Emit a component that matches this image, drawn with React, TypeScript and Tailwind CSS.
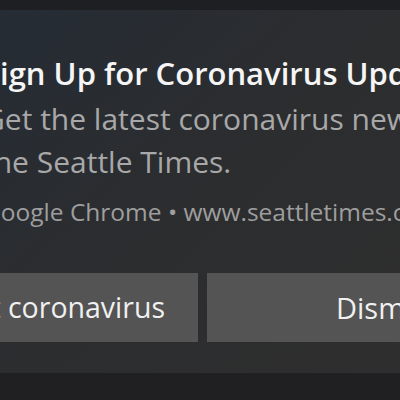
export default function App() {
  return (
    <div className="w-[400px] h-[400px] overflow-hidden bg-[#202023] flex flex-col font-['Open_Sans',sans-serif]">
      <div className="h-[10px] shrink-0 bg-[#1e1f22]" />
      <div className="h-[363px] shrink-0 bg-linear-to-br from-[#252c34] via-[#2c2d2f] to-[#2e2e2e] flex flex-col pt-[43px]">
        <div className="ml-[-17px] flex flex-col whitespace-nowrap">
          <div className="text-[31px] leading-[40px] font-semibold text-[#f5f5f5]">
            Sign Up for Coronavirus Updates
          </div>
          <div className="mt-[4px] text-[30px] leading-[43px] text-[#a8a8a8]">
            <div>Get the latest coronavirus news from</div>
            <div>the Seattle Times.</div>
          </div>
          <div className="mt-[13px] text-[24.5px] leading-[32px] text-[#9e9e9e]">
            Google Chrome • www.seattletimes.com
          </div>
        </div>
        <div className="ml-[-40px] mt-[45px] flex gap-[9px] whitespace-nowrap">
          <div className="w-[238px] h-[69px] shrink-0 bg-[#545454] flex items-center justify-end pr-[33px] text-[28.5px] text-[#f0f0f0]">
            Learn about coronavirus
          </div>
          <div className="w-[360px] h-[69px] shrink-0 bg-[#545454] flex items-center pl-[129px] text-[29px] text-[#f0f0f0]">
            Dismiss
          </div>
        </div>
      </div>
      <div className="flex-1 bg-[#202023]" />
    </div>
  );
}
